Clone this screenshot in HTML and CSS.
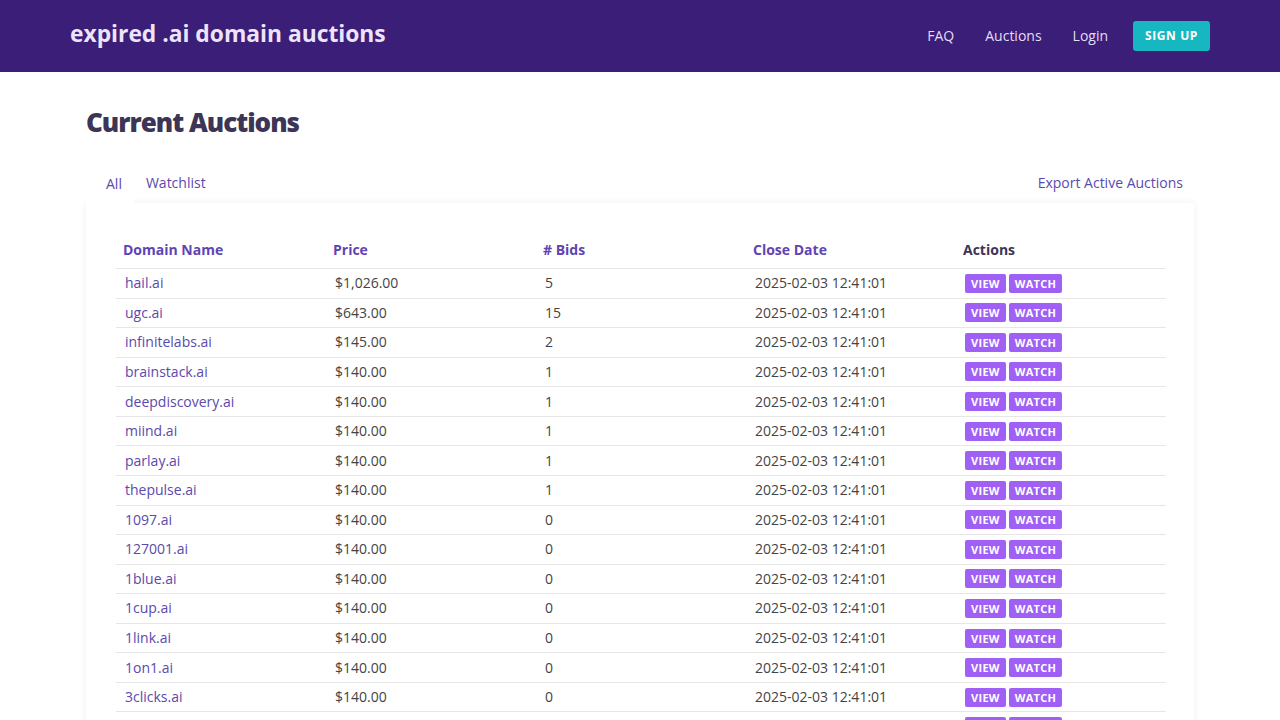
FILE: index.html
```html
<!DOCTYPE html>
<html>
<head>
<meta charset="utf-8">
<link rel="stylesheet" href="styles.css">
</head>
<body>
<header class="topbar">
  <div class="brand">expired .ai domain auctions</div>
  <nav class="nav">
    <a class="nav-link" href="#">FAQ</a>
    <a class="nav-link" href="#">Auctions</a>
    <a class="nav-link" href="#">Login</a>
    <a class="signup" href="#">SIGN UP</a>
  </nav>
</header>
<main class="main">
  <h1 class="title">Current Auctions</h1>
  <div class="tabs">
    <a class="tab active" href="#">All</a>
    <a class="tab" href="#">Watchlist</a>
    <a class="export" href="#">Export Active Auctions</a>
  </div>
  <div class="card">
    <table class="auctions">
      <thead>
        <tr><th class="sort">Domain Name</th><th class="sort">Price</th><th class="sort"># Bids</th><th class="sort">Close Date</th><th>Actions</th></tr>
      </thead>
      <tbody id="rows"></tbody>
    </table>
  </div>
</main>
<script src="app.js"></script>
</body>
</html>
```

FILE: app.js
```js
var data = [
  ["hail.ai","$1,026.00","5"],
  ["ugc.ai","$643.00","15"],
  ["infinitelabs.ai","$145.00","2"],
  ["brainstack.ai","$140.00","1"],
  ["deepdiscovery.ai","$140.00","1"],
  ["miind.ai","$140.00","1"],
  ["parlay.ai","$140.00","1"],
  ["thepulse.ai","$140.00","1"],
  ["1097.ai","$140.00","0"],
  ["127001.ai","$140.00","0"],
  ["1blue.ai","$140.00","0"],
  ["1cup.ai","$140.00","0"],
  ["1link.ai","$140.00","0"],
  ["1on1.ai","$140.00","0"],
  ["3clicks.ai","$140.00","0"],
  ["3dprint.ai","$140.00","0"]
];
var html = "";
data.forEach(function (d) {
  html += '<tr><td><a class="domain" href="#">' + d[0] + '</a></td><td>' + d[1] + '</td><td>' + d[2] +
    '</td><td>2025-02-03 12:41:01</td><td><div class="actions"><span class="btn">VIEW</span><span class="btn">WATCH</span></div></td></tr>';
});
document.getElementById("rows").innerHTML = html;
```

FILE: styles.css
```css
* { box-sizing: border-box; }
body {
  margin: 0;
  font-family: "Open Sans", "Liberation Sans", sans-serif;
  background: #fff;
  color: #444;
}
a { text-decoration: none; }
.topbar {
  height: 72px;
  background: #3b1e78;
  display: flex;
  align-items: center;
  justify-content: space-between;
  padding: 0 70px;
}
.brand {
  color: #ede4fa;
  font-weight: 700;
  font-size: 22.8px;
  margin-top: -5px;
}
.nav { display: flex; align-items: center; }
.nav-link {
  color: #e6dcf5;
  font-size: 14px;
  margin-right: 31px;
  margin-top: -1px;
}
.nav-link:nth-child(3) { margin-right: 25px; }
.signup {
  background: #17b7c1;
  color: #fff;
  font-weight: 700;
  font-size: 12px;
  letter-spacing: 0.6px;
  padding: 0 12px;
  height: 30px;
  line-height: 30px;
  border-radius: 3px;
  margin-top: -1px;
}
.main { padding: 0 86px; }
.title {
  margin: 0;
  padding-top: 30px;
  font-size: 26px;
  font-weight: 800;
  color: #3c3556;
  letter-spacing: -1px;
  line-height: 40px;
}
.tabs {
  display: flex;
  align-items: flex-end;
  margin-top: 29px;
  height: 32px;
  position: relative;
  z-index: 1;
}
.tab {
  color: #5b49ad;
  font-size: 14px;
  padding: 2px 12px 0 20px;
  height: 32px;
  line-height: 20px;
}
.tab.active {
  background: #fff;
  height: 35px;
  margin-bottom: -3px;
  padding-top: 3px;
}
.tab + .tab { padding-left: 12px; }
.export {
  margin-left: auto;
  color: #5b49ad;
  font-size: 14px;
  padding: 2px 11px 0 0;
  height: 32px;
  line-height: 20px;
}
.card {
  background: #fff;
  box-shadow: 0 0 8px rgba(0,0,0,0.06);
  padding: 31px 30px 20px;
  width: 1108px;
}
.auctions {
  width: 1050px;
  border-collapse: collapse;
  table-layout: fixed;
  font-size: 14px;
}
.auctions th {
  text-align: left;
  font-weight: 700;
  color: #3c3556;
  padding: 6px 7px 8px;
  border-bottom: 1px solid #e6e6e6;
  line-height: 20px;
}
.auctions th.sort { color: #5f44b3; }
.auctions td {
  padding: 0 9px;
  height: 29.57px;
  border-bottom: 1px solid #e6e6e6;
  line-height: 20px;
  color: #444;
  white-space: nowrap;
  vertical-align: middle;
}
.domain { color: #5b49ad; }
.actions { display: flex; gap: 3px; }
.btn {
  display: block;
  background: #a060f5;
  color: #fff;
  font-size: 11px;
  font-weight: 700;
  letter-spacing: 0.3px;
  line-height: 19px;
  height: 19px;
  padding: 0 6px;
  border-radius: 2px;
}
```
